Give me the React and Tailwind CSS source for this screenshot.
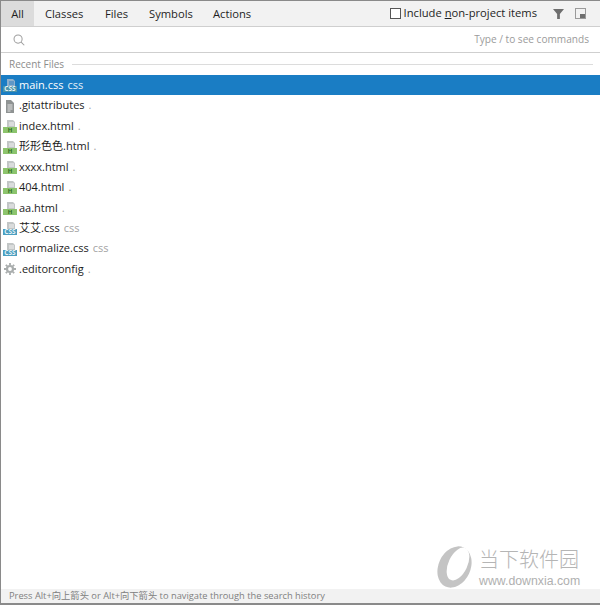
const font = { fontFamily: '"Open Sans", "Noto Sans CJK SC", sans-serif' };

const tabs = ["All", "Classes", "Files", "Symbols", "Actions"];

const files = [
  { name: "main.css", hint: "css", icon: "css", active: true },
  { name: ".gitattributes", hint: ".", icon: "text" },
  { name: "index.html", hint: ".", icon: "html" },
  { name: "形形色色.html", hint: ".", icon: "html" },
  { name: "xxxx.html", hint: ".", icon: "html" },
  { name: "404.html", hint: ".", icon: "html" },
  { name: "aa.html", hint: ".", icon: "html" },
  { name: "艾艾.css", hint: "css", icon: "css" },
  { name: "normalize.css", hint: "css", icon: "css" },
  { name: ".editorconfig", hint: ".", icon: "gear" },
];

function FileIcon({ type, active }) {
  if (type === "text") {
    return (
      <svg width="16" height="16" viewBox="0 0 16 16" className="shrink-0">
        <path d="M3 2h5l3 3v10H3z" fill="#8f9393" />
        <path d="M4.5 7h5M4.5 9h5M4.5 11h5M4.5 13h3" stroke="#e4e4e4" strokeWidth="1" />
      </svg>
    );
  }
  if (type === "gear") {
    return (
      <svg width="16" height="16" viewBox="0 0 16 16" className="shrink-0">
        <circle cx="7" cy="8" r="3" fill="none" stroke="#a9adad" strokeWidth="2.2" />
        <path d="M7 2v2M7 12v2M1 8h2M11 8h2M2.8 3.8l1.4 1.4M9.8 10.8l1.4 1.4M2.8 12.2l1.4-1.4M9.8 5.2l1.4-1.4" stroke="#a9adad" strokeWidth="1.8" />
      </svg>
    );
  }
  const css = type === "css";
  return (
    <svg width="16" height="16" viewBox="0 0 16 16" className="shrink-0">
      <path d="M4 2h6l2 2v5H4z" fill={active ? "#8fb0cc" : "#c2c6c6"} />
      <path d="M6 5h5M6 7h5" stroke={active ? "#2f7fc0" : "#f2f2f2"} strokeWidth="1" />
      <rect x="0" y="9" width="14" height="6" fill={css ? (active ? "#4a93a8" : "#4b9fc0") : "#8cc46d"} />
      <text x="7" y="14.4" textAnchor="middle" fontSize={css ? "6.5" : "6"} fontWeight="700" fill={css ? "#e8f3f7" : "#2c6a22"} fontFamily="Open Sans, sans-serif">
        {css ? "CSS" : "H"}
      </text>
    </svg>
  );
}

function FileRow({ file }) {
  return (
    <div className={`flex h-[20.45px] items-center pl-[2px] text-[11px] ${file.active ? "bg-[#1a7dc4] text-white" : "text-[#1c1c1c]"}`}>
      <FileIcon type={file.icon} active={file.active} />
      <span>{file.name}</span>
      <span className={`ml-[4px] ${file.active ? "text-[#e4f0f8]" : "text-[#a3a3a3]"}`}>{file.hint}</span>
    </div>
  );
}

function Watermark() {
  return (
    <div className="absolute left-[433px] top-[544px] flex items-start">
      <svg width="41" height="43" viewBox="0 0 41 43">
        <ellipse cx="20.5" cy="22" rx="16" ry="21.5" transform="rotate(25 20.5 22)" fill="#c4c4c4" />
        <ellipse cx="24" cy="19" rx="9.5" ry="17.5" transform="rotate(25 24 19)" fill="#ffffff" />
      </svg>
      <div className="ml-[4px] flex flex-col">
        <span className="text-[20px] leading-[28px] text-[#b5b5b5]" style={{ fontFamily: '"Noto Sans CJK SC", sans-serif', fontWeight: 300 }}>当下软件园</span>
        <span className="text-[12.3px] leading-[16px] text-[#b0b0b0]" style={{ fontFamily: '"Liberation Sans", sans-serif' }}>www.downxia.com</span>
      </div>
    </div>
  );
}

export default function App() {
  return (
    <div className="relative flex h-[605px] w-[600px] flex-col overflow-hidden border-t border-b-2 border-l border-[#8a8a8a] bg-white" style={font}>
      {/* tabs */}
      <div className="flex h-[25px] shrink-0 items-center bg-[#f2f2f2] text-[11.2px] text-[#1f1f1f]">
        <div className="flex">
          {tabs.map((t, i) => (
            <div key={t} className={`flex h-[25px] items-center pt-[1px] ${i === 0 ? "w-[33px] justify-center bg-[#dcdcdc]" : i === 1 ? "ml-[11px] w-[39px]" : i === 2 ? "ml-[21px] w-[23px]" : i === 3 ? "ml-[21px] w-[44px]" : "ml-[20px] w-[38px]"}`}>
              {t}
            </div>
          ))}
        </div>
        <div className="ml-auto flex items-center pr-[14px]">
          <div className="h-[11px] w-[11px] border border-[#555555] bg-white" />
          <span className="ml-[3px]">Include <u>n</u>on-project items</span>
          <svg width="11" height="11" viewBox="0 0 12 12" className="ml-[16px]">
            <path d="M0 1h12L7.5 6.5V12h-3V6.5z" fill="#6e6e6e" />
          </svg>
          <svg width="11" height="11" viewBox="0 0 11 11" className="ml-[11px]">
            <rect x="0.5" y="0.5" width="10" height="10" fill="none" stroke="#9a9a9a" />
            <rect x="5" y="6" width="5" height="4" fill="#6e6e6e" />
          </svg>
        </div>
      </div>
      {/* search */}
      <div className="flex h-[27px] shrink-0 items-center border-t border-b border-[#cfcfcf] bg-white pl-[12px] pr-[11px]">
        <svg width="12" height="12" viewBox="0 0 13 13" fill="none" stroke="#9e9e9e" strokeWidth="1.1">
          <circle cx="5.5" cy="5.5" r="4.4" />
          <path d="M8.8 8.8l3.4 3.4" />
        </svg>
        <span className="ml-auto text-[10.1px] text-[#9b9b9b]">Type / to see commands</span>
      </div>
      {/* recent */}
      <div className="flex h-[22px] shrink-0 items-center pl-[8px] pr-[7px]">
        <span className="text-[10px] text-[#8c8c8c]">Recent Files</span>
        <div className="ml-[8px] h-px flex-1 bg-[#dcdcdc]" />
      </div>
      <div className="flex flex-col">
        {files.map((f) => (
          <FileRow key={f.name} file={f} />
        ))}
      </div>
      {/* footer */}
      <div className="mt-auto flex h-[14px] shrink-0 items-center bg-[#f2f2f2] pl-[8px] text-[9.3px] text-[#808080]">
        Press Alt+向上箭头 or Alt+向下箭头 to navigate through the search history
      </div>
      <Watermark />
    </div>
  );
}
